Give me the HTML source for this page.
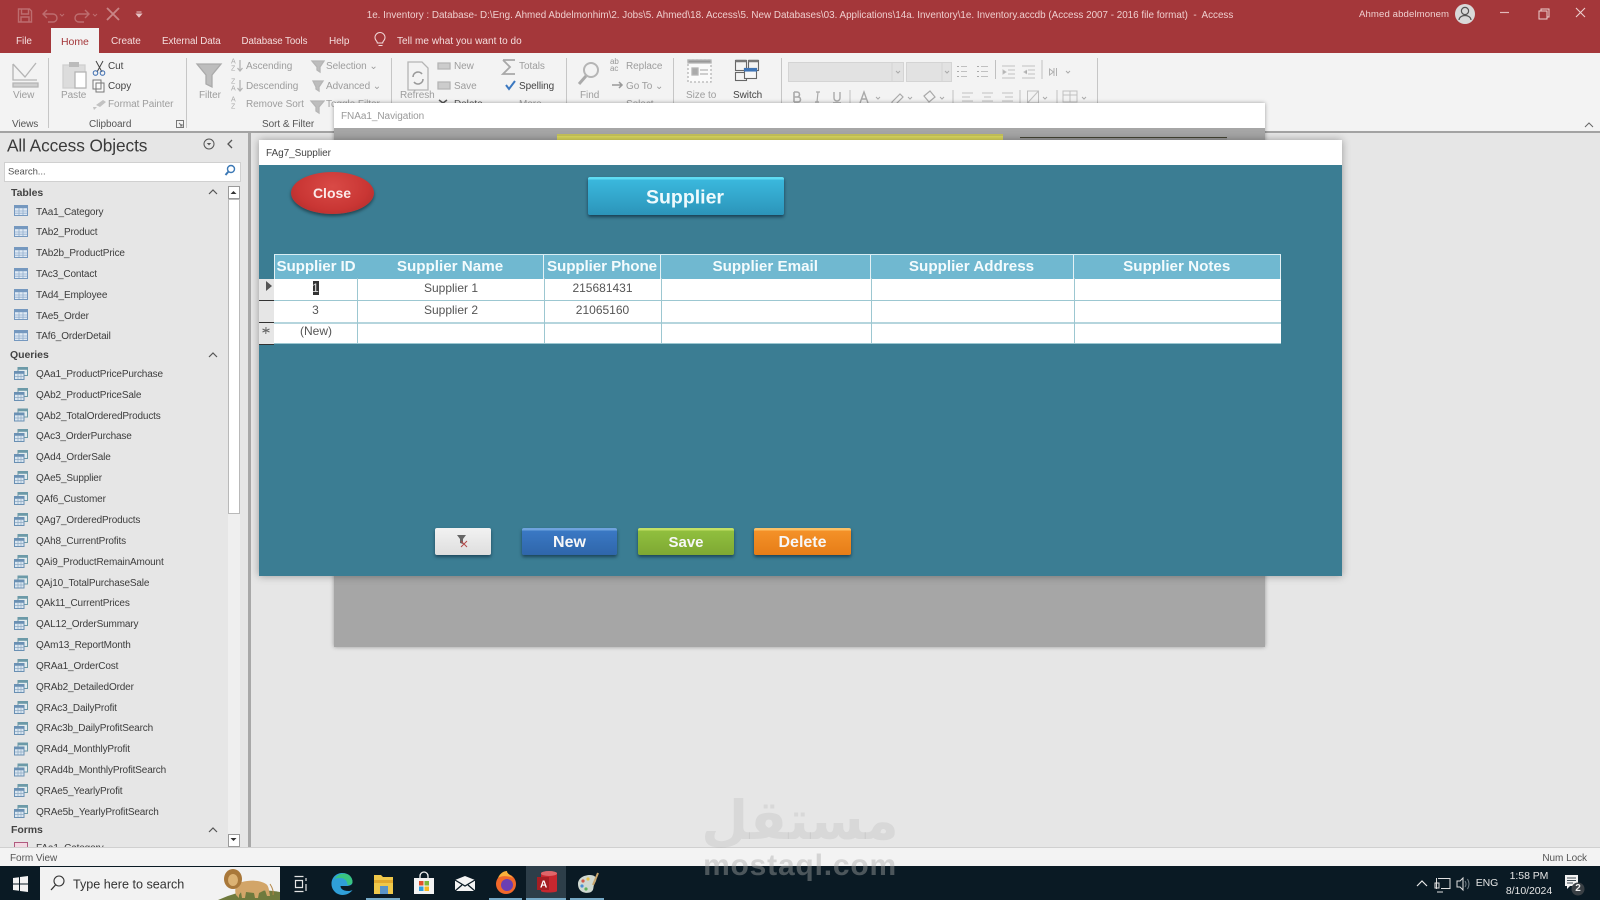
<!DOCTYPE html>
<html lang="en"><head><meta charset="utf-8"><title>Access</title>
<style>
html,body{margin:0;padding:0;width:1600px;height:900px;overflow:hidden;background:#e6e6e6}
body{position:relative;font-family:"Liberation Sans",sans-serif;color:#333}
.a{position:absolute}
.t{position:absolute;white-space:nowrap;line-height:1;transform:translateY(-50%);font-size:10px;letter-spacing:-.05px}
.g{color:#9d9d9d}
.w{color:#f4dede}
.l{color:#3d3d3d;letter-spacing:-.15px}
.sep{position:absolute;top:58px;height:70px;width:1px;background:#c6c6c6}
.c{text-align:center;transform:translate(-50%,-50%)}
svg{position:absolute;left:0;top:0;overflow:visible}
.btn{position:absolute;color:#f7f7f7;font-weight:bold;text-align:center;border-radius:2px;box-shadow:0 2px 3px rgba(0,20,40,.55)}
.hd{position:absolute;top:254px;height:24.5px;line-height:26px;background:#70b8d0;color:#f3fbfd;font-weight:bold;font-size:15.200px;text-align:center;white-space:nowrap;border-right:1px solid #e4f1f5}
.cell{position:absolute;font-size:12px;color:#555;line-height:1;transform:translate(-50%,-50%);white-space:nowrap}
</style></head>
<body>
<svg width="0" height="0" style="position:absolute">
<defs>
<symbol id="tb" viewBox="0 0 14 11"><rect x=".5" y=".5" width="13" height="10" fill="#dfe9f4" stroke="#7598bf"/><rect x="1" y="1" width="12" height="2.200" fill="#7598bf"/><path d="M5 3v7M9 3v7M1 6h12M1 8.200h12" stroke="#93afcd" stroke-width=".8"/></symbol>
<symbol id="qr" viewBox="0 0 14 13"><rect x="4" y=".5" width="9.500" height="8" fill="#e3ecee" stroke="#6c9aa8"/><rect x="4" y="1" width="9.500" height="1.800" fill="#6c9aa8"/><rect x=".5" y="4.500" width="9.500" height="8" fill="#dae6f0" stroke="#6a90b3"/><rect x=".5" y="5" width="9.500" height="1.800" fill="#6a90b3"/><path d="M4 7v5M7 7v5M1 9.500h9" stroke="#8fabc4" stroke-width=".7"/></symbol>
</defs></svg>

<!-- title bar -->
<div class="a" style="left:0;top:0;width:1600px;height:53px;background:#a4373a"></div>
<div class="a" style="left:51px;top:28px;width:48px;height:26px;background:#f3f3f3"></div>
<svg width="1600" height="60">
<g fill="none" stroke="#bd6d6f" stroke-width="1.400">
<path d="M18.500 9h11l2 2v11h-13zM21.500 9v5h7V9M21 22v-5h8v5"/>
<path d="M44 14h9a4 4 0 0 1 0 8h-5M47 10l-4 4 4 4"/>
<path d="M88 14h-9a4 4 0 0 0 0 8h5M85 10l4 4-4 4"/>
</g>
<path d="M107 8l12 12M119 8l-12 12" stroke="#c98587" stroke-width="1.800"/>
<path d="M60 14l2 2 2-2M93 14l2 2 2-2" stroke="#bd6d6f" fill="none"/>
<path d="M136.500 12h5M136.500 14l2.500 3 2.500-3z" stroke="#e8c6c7" fill="#e8c6c7" stroke-width="1"/>
<circle cx="1465" cy="14" r="10" fill="#d9d9d9"/>
<circle cx="1465" cy="11" r="3.600" fill="none" stroke="#555" stroke-width="1.200"/>
<path d="M1459 20c.5-6 11.500-6 12 0" fill="none" stroke="#555" stroke-width="1.200"/>
<path d="M1500 12.500h9" stroke="#e3b9ba" stroke-width="1.200"/>
<path d="M1539 11h8v8h-8zM1541 11V9h8v8h-2" fill="none" stroke="#ecd0d0" stroke-width="1"/>
<path d="M1576 8l9 9M1585 8l-9 9" stroke="#ecd0d0" stroke-width="1.100"/>
<path d="M376 46c-1-1-1.500-2-1.500-3.500a5 5 0 1 1 10 0c0 1.500-.500 2.500-1.500 3.500-.5.6-.8 1-.8 2h-5.400c0-1-.3-1.400-.8-2zM378 50.500h4" fill="none" stroke="#f1d9d9" transform="translate(.5 -5)"/>
</svg>
<div class="t w" style="left:800px;top:15.500px;font-size:9.850px;letter-spacing:0;transform:translate(-50%,-50%);color:#efcfcf">1e. Inventory : Database- D:\Eng. Ahmed Abdelmonhim\2. Jobs\5. Ahmed\18. Access\5. New Databases\03. Applications\14a. Inventory\1e. Inventory.accdb (Access 2007 - 2016 file format)&nbsp; -&nbsp; Access</div>
<div class="t w" style="left:1359px;top:15px;font-size:9.600px;letter-spacing:.1px;color:#efcfcf">Ahmed abdelmonem</div>
<div class="t w" style="left:16px;top:42px;">File</div>
<div class="t" style="left:61px;top:42px;color:#a4373a;font-size:10.500px">Home</div>
<div class="t w" style="left:111px;top:42px;">Create</div>
<div class="t w" style="left:162px;top:42px;font-size:9.800px">External Data</div>
<div class="t w" style="left:241.500px;top:42px;font-size:9.700px">Database Tools</div>
<div class="t w" style="left:329px;top:42px;">Help</div>
<div class="t w" style="left:397px;top:42px;font-size:10px;letter-spacing:.05px">Tell me what you want to do</div>

<!-- ribbon -->
<div class="a" style="left:0;top:53px;width:1600px;height:78px;background:#f3f3f3;border-bottom:2px solid #a3a3a3;box-sizing:content-box"></div>
<div class="sep" style="left:48px"></div><div class="sep" style="left:186px"></div><div class="sep" style="left:391px"></div><div class="sep" style="left:566px"></div><div class="sep" style="left:673px"></div><div class="sep" style="left:781px"></div><div class="sep" style="left:1097px"></div>
<svg width="1600" height="135">
<g fill="none" stroke="#b5b5b5" stroke-width="1.300">
<path d="M13 64l12 13 11-14M13 64v16h24"/><path d="M13 83h25v4H13z" fill="#cfcfcf"/>
<rect x="63" y="65" width="22" height="23" fill="#dcdcdc" stroke="#cfcfcf"/><rect x="69" y="62" width="10" height="5" fill="#bbb" stroke="none"/><rect x="75" y="72" width="11" height="16" fill="#fff"/>
<path d="M197 64h24l-9 11v12l-6-3v-9z" fill="#bdbdbd" stroke="#aaa"/>
<path d="M240 60v11M237.500 68l2.500 3 2.500-3M240 80v11M237.500 88l2.500 3 2.500-3"/>
<path d="M312 61h12l-4 6v5l-3-2v-3zM313 81h10l-4 6v4l-3-2v-2zM311 101h13l-5 6v6l-3-2v-4z" fill="#bdbdbd"/>
<path d="M408 62h14l6 6v22h-20z"/><path d="M413 77a5 5 0 0 1 9-3M423 79a5 5 0 0 1-9 3" stroke="#999" stroke-width="1.600"/>
<path d="M438 63h12v6h-12zM438 82h12v7h-12z" fill="#ccc"/>
<path d="M503 60h12M503 60l7 7-7 7h12" stroke-width="1.800" stroke="#a8a8a8"/>
<circle cx="591" cy="70" r="7" stroke-width="2" stroke="#b5b5b5"/><path d="M586 76l-7 8" stroke-width="3" stroke="#aaa"/>
<path d="M612 85h10M619 82l3 3-3 3" stroke="#999" stroke-width="1.500"/>
<rect x="688" y="60" width="23" height="22" stroke-dasharray="2 2" fill="#fafafa"/><rect x="688" y="60" width="23" height="3" fill="#999"/>
<rect x="692" y="68" width="6" height="7" fill="#aaa"/><path d="M700 70h8M700 74h8"/>
</g>
<g stroke="#666" fill="#f3f3f3" stroke-width="1.100">
<rect x="735.500" y="60.500" width="11" height="10"/><rect x="748.500" y="60.500" width="10" height="10"/><rect x="735.500" y="72.500" width="11" height="8"/>
<path d="M735.500 61h11M748.500 61h10" stroke-width="2.500" stroke="#777"/>
<rect x="744.500" y="68.500" width="12" height="10" fill="#f7f7f7"/><rect x="744.500" y="68.500" width="12" height="2.500" fill="#3f74b5" stroke="#3f74b5"/>
</g>
<path d="M96 61l6 11M103 61l-6 11" stroke="#444" stroke-width="1"/><circle cx="95.500" cy="73" r="2.300" fill="none" stroke="#3b6cb0"/><circle cx="102.500" cy="73" r="2.300" fill="none" stroke="#3b6cb0"/>
<path d="M93 80h8v9h-8zM96 83h8v9h-8z" fill="#fafafa" stroke="#777"/>
<path d="M96 105l7-5 3 2-6 5zM93 107l4 0-3 3z" fill="#c2c2c2"/>
<path d="M506 85l3 4 6-8" stroke="#3b78c0" stroke-width="2" fill="none"/>
<path d="M439 100l8 6M447 100l-8 6" stroke="#555" stroke-width="1.500"/>
<path d="M788.500 62.500h115v19h-115zM906.500 62.500h45v19h-45z" fill="#e2e2e2" stroke="#d4d4d4"/>
<path d="M892 62.500v19M942 62.500v19" stroke="#d4d4d4"/>
<path d="M896 71l2 2 2-2M945 71l2 2 2-2" stroke="#aaa" fill="none"/>
<g stroke="#c0c0c0" fill="none">
<path d="M961 66.500h6M961 71.500h6M961 76.500h6M981 66.500h7M981 71.500h7M981 76.500h7"/>
<path d="M957 66.500h2M957 71.500h2M957 76.500h2M977 66.500h2M977 71.500h2M977 76.500h2" stroke="#aaa"/>
<path d="M1002 66h13M1008 70h7M1008 74h7M1002 78h13M1022 66h13M1028 70h7M1028 74h7M1022 78h13"/>
<path d="M1003 70l3 2-3 2zM1027 70l-3 2 3 2" fill="#aaa"/>
<path d="M995.500 60v19M1042 60v19M850 90v13M953 90v13M1020 90v13M1057 90v13"/>
<path d="M1049.500 69v6l4-3zM1054 68v8M1056.500 68v8" stroke="#b0b0b0"/>
<path d="M1066 71l2 2 2-2M876 97l2 2 2-2M908 97l2 2 2-2M940 97l2 2 2-2M1043 97l2 2 2-2M1082 97l2 2 2-2" stroke="#aaa"/>
<path d="M962 93h11M962 97h8M962 101h11M982 93h11M984 97h7M982 101h11M1002 93h11M1005 97h8M1002 101h11"/>
<path d="M1027.500 91h11v12h-11zM1027.500 103l11-12"/>
<path d="M1063 91h14v11h-14zM1063 95h14M1070 91v11" />
</g>
<g fill="none" stroke="#aaa" stroke-width="1.200">
<path d="M794 92v10M794 92h3a2.500 2.500 0 0 1 0 5h-3M794 97h4a2.500 2.500 0 0 1 0 5h-4" stroke-width="1.600"/>
<path d="M816 92h4M815 102h4M818 92l-1 10"/>
<path d="M834 92v6a3 3 0 0 0 6 0v-6M833 103h8" stroke-width="1.400"/>
<path d="M860 103l4-11 4 11M862 99h5" stroke-width="1.400"/>
<path d="M892 102l8-8 3 3-8 8h-3zM924 96l5 6 6-5-5-6z"/>
</g>
<path d="M1585 127l4-4 4 4" fill="none" stroke="#666"/>
</svg>
<div class="t" style="left:231px;top:62px;font-size:7px;color:#aaa">A</div>
<div class="t" style="left:231px;top:69px;font-size:7px;color:#aaa">Z</div>
<div class="t" style="left:231px;top:82px;font-size:7px;color:#aaa">Z</div>
<div class="t" style="left:231px;top:89px;font-size:7px;color:#aaa">A</div>
<div class="t" style="left:231px;top:100px;font-size:7px;color:#aaa">A</div>
<div class="t" style="left:231px;top:107px;font-size:7px;color:#aaa">Z</div>
<div class="t" style="left:610px;top:62px;font-size:8px;color:#999">ab</div>
<div class="t" style="left:610px;top:69px;font-size:8px;color:#999">ac</div>
<div class="t g" style="left:13px;top:96px">View</div>
<div class="t g" style="left:61px;top:96px">Paste</div>
<div class="t" style="left:108px;top:67px;color:#444">Cut</div>
<div class="t" style="left:108px;top:87px;color:#444">Copy</div>
<div class="t g" style="left:108px;top:105px">Format Painter</div>
<div class="t g" style="left:199px;top:96px">Filter</div>
<div class="t g" style="left:246px;top:67px">Ascending</div>
<div class="t g" style="left:246px;top:87px">Descending</div>
<div class="t g" style="left:246px;top:105px">Remove Sort</div>
<div class="t g" style="left:326px;top:67px">Selection ⌄</div>
<div class="t g" style="left:326px;top:87px">Advanced ⌄</div>
<div class="t g" style="left:326px;top:105px">Toggle Filter</div>
<div class="t g" style="left:400px;top:96px">Refresh</div>
<div class="t g" style="left:454px;top:67px">New</div>
<div class="t g" style="left:454px;top:87px">Save</div>
<div class="t" style="left:454px;top:105px;color:#555">Delete</div>
<div class="t g" style="left:519px;top:67px">Totals</div>
<div class="t" style="left:519px;top:87px;color:#444">Spelling</div>
<div class="t g" style="left:519px;top:105px">More</div>
<div class="t g" style="left:580px;top:96px">Find</div>
<div class="t g" style="left:626px;top:67px">Replace</div>
<div class="t g" style="left:626px;top:87px">Go To ⌄</div>
<div class="t g" style="left:626px;top:105px">Select</div>
<div class="t g" style="left:686px;top:96px">Size to</div>
<div class="t" style="left:733px;top:96px;color:#444">Switch</div>
<div class="t" style="left:12px;top:124.500px;color:#555;font-size:10px">Views</div>
<div class="t" style="left:89px;top:124.500px;color:#555;font-size:10px">Clipboard</div>
<div class="t" style="left:262px;top:124.500px;color:#555;font-size:10px">Sort &amp; Filter</div>
<svg width="200" height="135"><path d="M176.500 120.500h7v7h-7zM179 123l3 3M182 124v2h-2" fill="none" stroke="#777"/></svg>

<!-- navigation form behind -->
<div class="a" style="left:334px;top:103px;width:931px;height:544px;background:#a6a6a6;box-shadow:0 0 4px rgba(0,0,0,.35)"></div>
<div class="a" style="left:334px;top:103px;width:931px;height:25px;background:#fff"></div>
<div class="t" style="left:341px;top:117px;color:#999">FNAa1_Navigation</div>
<div class="a" style="left:557px;top:134px;width:446px;height:8px;background:#dedb5e;border-top:2px solid #c7c35a"></div>
<div class="a" style="left:1020px;top:137px;width:207px;height:6px;background:#9a9a9a;border-top:1px solid #443"></div>

<!-- nav pane -->
<div class="a" style="left:0;top:133px;width:247px;height:715px;background:#e6e6e6;overflow:hidden">
<div class="t" style="left:7px;top:12.500px;font-size:17.300px;letter-spacing:-.1px;color:#3b3b3b">All Access Objects</div>
<div class="a" style="left:4px;top:29px;width:235px;height:18px;background:#fff;border:1px solid #d0d0d0"></div>
<div class="t" style="left:8px;top:38.500px;font-size:9.500px;color:#555">Search...</div>
<div class="t" style="left:11px;top:59.500px;font-weight:bold;font-size:10.500px;color:#444">Tables</div>
<div class="t" style="left:10px;top:222px;font-weight:bold;font-size:10.500px;color:#444">Queries</div>
<div class="t" style="left:11px;top:696.500px;font-weight:bold;font-size:10.500px;color:#444">Forms</div>
<div class="t l" style="left:36px;top:79.600px">TAa1_Category</div>
<div class="t l" style="left:36px;top:100.400px">TAb2_Product</div>
<div class="t l" style="left:36px;top:121.200px">TAb2b_ProductPrice</div>
<div class="t l" style="left:36px;top:142px">TAc3_Contact</div>
<div class="t l" style="left:36px;top:162.800px">TAd4_Employee</div>
<div class="t l" style="left:36px;top:183.600px">TAe5_Order</div>
<div class="t l" style="left:36px;top:204.400px">TAf6_OrderDetail</div>
<div class="t l" style="left:36px;top:241.800px">QAa1_ProductPricePurchase</div>
<div class="t l" style="left:36px;top:262.700px">QAb2_ProductPriceSale</div>
<div class="t l" style="left:36px;top:283.500px">QAb2_TotalOrderedProducts</div>
<div class="t l" style="left:36px;top:304.400px">QAc3_OrderPurchase</div>
<div class="t l" style="left:36px;top:325.300px">QAd4_OrderSale</div>
<div class="t l" style="left:36px;top:346.200px">QAe5_Supplier</div>
<div class="t l" style="left:36px;top:367px">QAf6_Customer</div>
<div class="t l" style="left:36px;top:387.900px">QAg7_OrderedProducts</div>
<div class="t l" style="left:36px;top:408.800px">QAh8_CurrentProfits</div>
<div class="t l" style="left:36px;top:429.700px">QAi9_ProductRemainAmount</div>
<div class="t l" style="left:36px;top:450.500px">QAj10_TotalPurchaseSale</div>
<div class="t l" style="left:36px;top:471.400px">QAk11_CurrentPrices</div>
<div class="t l" style="left:36px;top:492.300px">QAL12_OrderSummary</div>
<div class="t l" style="left:36px;top:513px">QAm13_ReportMonth</div>
<div class="t l" style="left:36px;top:533.800px">QRAa1_OrderCost</div>
<div class="t l" style="left:36px;top:554.600px">QRAb2_DetailedOrder</div>
<div class="t l" style="left:36px;top:575.500px">QRAc3_DailyProfit</div>
<div class="t l" style="left:36px;top:596.300px">QRAc3b_DailyProfitSearch</div>
<div class="t l" style="left:36px;top:617.100px">QRAd4_MonthlyProfit</div>
<div class="t l" style="left:36px;top:637.900px">QRAd4b_MonthlyProfitSearch</div>
<div class="t l" style="left:36px;top:658.800px">QRAe5_YearlyProfit</div>
<div class="t l" style="left:36px;top:679.700px">QRAe5b_YearlyProfitSearch</div>
<div class="t l" style="left:36px;top:715.500px">FAa1_Category</div>
<!-- scrollbar -->
<div class="a" style="left:227.500px;top:53px;width:12px;height:660px;background:#efefef"></div>
<div class="a" style="left:227.500px;top:53px;width:10px;height:11px;background:#fff;border:1px solid #9a9a9a"></div>
<div class="a" style="left:227.500px;top:66px;width:10px;height:313px;background:#fff;border:1px solid #b9b9b9"></div>
<div class="a" style="left:227.500px;top:701px;width:10px;height:11px;background:#fff;border:1px solid #9a9a9a"></div>
<svg width="246" height="715">
<use href="#tb" x="14" y="72" width="14" height="11"/><use href="#tb" x="14" y="93" width="14" height="11"/><use href="#tb" x="14" y="114" width="14" height="11"/><use href="#tb" x="14" y="135" width="14" height="11"/><use href="#tb" x="14" y="156" width="14" height="11"/><use href="#tb" x="14" y="176" width="14" height="11"/><use href="#tb" x="14" y="197" width="14" height="11"/>
<g transform="translate(0 -1)">
<use href="#qr" x="14" y="235" width="14" height="13"/><use href="#qr" x="14" y="256" width="14" height="13"/><use href="#qr" x="14" y="276.500" width="14" height="13"/><use href="#qr" x="14" y="297" width="14" height="13"/><use href="#qr" x="14" y="318" width="14" height="13"/><use href="#qr" x="14" y="339" width="14" height="13"/><use href="#qr" x="14" y="360" width="14" height="13"/><use href="#qr" x="14" y="381" width="14" height="13"/><use href="#qr" x="14" y="402" width="14" height="13"/><use href="#qr" x="14" y="423" width="14" height="13"/><use href="#qr" x="14" y="443.500" width="14" height="13"/><use href="#qr" x="14" y="464" width="14" height="13"/><use href="#qr" x="14" y="485" width="14" height="13"/><use href="#qr" x="14" y="506" width="14" height="13"/><use href="#qr" x="14" y="527" width="14" height="13"/><use href="#qr" x="14" y="548" width="14" height="13"/><use href="#qr" x="14" y="569" width="14" height="13"/><use href="#qr" x="14" y="590" width="14" height="13"/><use href="#qr" x="14" y="610.500" width="14" height="13"/><use href="#qr" x="14" y="631.500" width="14" height="13"/><use href="#qr" x="14" y="652" width="14" height="13"/><use href="#qr" x="14" y="673" width="14" height="13"/>
</g>
<rect x="14.500" y="709.500" width="13" height="10" fill="#f3d9e3" stroke="#b05a7f"/>
<path d="M209 61l4-4 4 4M209 224l4-4 4 4M209 699l4-4 4 4" fill="none" stroke="#555" stroke-width="1.200"/>
<path d="M230.500 61l3-3 3 3zM230.500 705l3 3 3-3z" fill="#333"/>
<circle cx="209" cy="11" r="5" fill="none" stroke="#555"/><path d="M206.800 10l2.200 2.400 2.200-2.400z" fill="#555"/>
<path d="M232 7l-4 4 4 4" fill="none" stroke="#555" stroke-width="1.300"/>
<circle cx="231" cy="36" r="3.500" fill="none" stroke="#3b78b5" stroke-width="1.400"/><path d="M228.500 38.500l-3 3.500" stroke="#3b78b5" stroke-width="2"/>
</svg>
</div>
<div class="a" style="left:248px;top:133px;width:2.500px;height:715px;background:#a8a8a8"></div>

<!-- supplier form -->
<div class="a" style="left:258.500px;top:140px;width:1083px;height:436px;background:#3b7d93;box-shadow:0 0 8px rgba(0,0,0,.35)"></div>
<div class="a" style="left:258.500px;top:140px;width:1083px;height:25px;background:#fff"></div>
<div class="t" style="left:266px;top:153.500px;color:#444">FAg7_Supplier</div>
<div class="a" style="left:291px;top:172px;width:83px;height:42px;border-radius:50%;background:radial-gradient(ellipse at 50% 35%,#d94a46 0,#c93634 60%,#a72a2a 100%);box-shadow:0 2px 3px rgba(0,0,0,.45)"></div>
<div class="t c" style="left:332px;top:193px;font-size:14px;font-weight:bold;color:#fbe9e9;letter-spacing:0">Close</div>
<div class="a" style="left:588px;top:177px;width:196px;height:38px;background:linear-gradient(#5fdcf3 0,#5fdcf3 2px,#3ab8dd 3px,#2c94b9 100%);border-radius:2px;box-shadow:0 2px 3px rgba(0,20,40,.6)"></div>
<div class="t c" style="left:685px;top:198px;font-size:19.500px;font-weight:bold;color:#eefafd;letter-spacing:0">Supplier</div>

<!-- table -->
<div class="a" style="left:258.500px;top:279px;width:15.500px;height:65px;background:#e6e6e6;border-bottom:1px solid #333"></div>
<div class="a" style="left:258.500px;top:300px;width:15.500px;height:1px;background:#333"></div>
<div class="a" style="left:258.500px;top:322px;width:15.500px;height:1px;background:#333"></div>
<div class="a" style="left:274px;top:278px;width:1007px;height:65.500px;background:#fff"></div>
<div class="hd" style="left:274px;width:82px;border-left:1px solid #e4f1f5;letter-spacing:-.1px">Supplier ID</div>
<div class="hd" style="left:357px;width:186px">Supplier Name</div>
<div class="hd" style="left:544px;width:116px;letter-spacing:-.1px">Supplier Phone</div>
<div class="hd" style="left:661px;width:208.500px">Supplier Email</div>
<div class="hd" style="left:870.500px;width:202px">Supplier Address</div>
<div class="hd" style="left:1073.500px;width:206.500px">Supplier Notes</div>
<div class="a" style="left:274px;top:254px;width:1007px;height:1px;background:#d8edf3"></div>
<div class="a" style="left:274px;top:300px;width:1007px;height:1px;background:#9cc7d1"></div>
<div class="a" style="left:274px;top:322px;width:1007px;height:1.500px;background:#b5d5dd"></div>
<div class="a" style="left:274px;top:343px;width:1007px;height:1px;background:#9cc7d1"></div>
<div class="a" style="left:357px;top:278px;width:1px;height:66px;background:#9cc7d1"></div>
<div class="a" style="left:544px;top:278px;width:1px;height:66px;background:#9cc7d1"></div>
<div class="a" style="left:661px;top:278px;width:1px;height:66px;background:#9cc7d1"></div>
<div class="a" style="left:871px;top:278px;width:1px;height:66px;background:#9cc7d1"></div>
<div class="a" style="left:1074px;top:278px;width:1px;height:66px;background:#9cc7d1"></div>
<div class="a" style="left:312.500px;top:281px;width:6px;height:14px;background:#333"></div>
<div class="cell" style="left:315.500px;top:288px;color:#ddd">1</div>
<div class="cell" style="left:451px;top:288px">Supplier 1</div>
<div class="cell" style="left:602.500px;top:288px">215681431</div>
<div class="cell" style="left:315.500px;top:309.500px">3</div>
<div class="cell" style="left:451px;top:309.500px">Supplier 2</div>
<div class="cell" style="left:602.500px;top:309.500px">21065160</div>
<div class="cell" style="left:316px;top:331px">(New)</div>
<svg width="300" height="350"><path d="M266 281l6 5-6 5z" fill="#555"/><path d="M266 327l-.2 7M262.500 329l7 3M269.500 329l-7 3" stroke="#666" stroke-width="1"/></svg>

<!-- buttons -->
<div class="btn" style="left:435px;top:528px;width:56px;height:27px;background:linear-gradient(#f2f2f2,#dedede);box-shadow:0 2px 3px rgba(0,20,40,.5)"></div>
<svg width="500" height="560"><path d="M457 535h9l-3 4v5l-3-1v-4z" fill="#666"/><path d="M461 541l6 6M467 541l-6 6" stroke="#b34a4a" stroke-width="1"/></svg>
<div class="btn" style="left:522px;top:528px;width:95px;height:27px;line-height:29px;font-size:16px;background:linear-gradient(#6fa3de 0,#6fa3de 2px,#3a78c4 3px,#2f66aa 100%)">New</div>
<div class="btn" style="left:638px;top:528px;width:96px;height:27px;line-height:29px;font-size:15px;background:linear-gradient(#c2e064 0,#c2e064 2px,#90bf3e 3px,#7ea833 100%)">Save</div>
<div class="btn" style="left:754px;top:528px;width:97px;height:27px;line-height:29px;font-size:16px;background:linear-gradient(#fbc066 0,#fbc066 2px,#f49128 3px,#e67d17 100%)">Delete</div>

<!-- status bar -->
<div class="a" style="left:0;top:847px;width:1600px;height:19px;background:#f3f3f3;border-top:1px solid #d0d0d0;box-sizing:border-box"></div>
<div class="t" style="left:10px;top:859px;color:#555;font-size:10px">Form View</div>
<div class="t" style="right:13px;top:859px;color:#555;font-size:10px">Num Lock</div>

<!-- taskbar -->
<div class="a" style="left:0;top:866px;width:1600px;height:34px;background:#0a1a24"></div>
<div class="a" style="left:40px;top:867px;width:240px;height:33px;background:#f2f2f2"></div>
<div class="a" style="left:526px;top:866px;width:40px;height:34px;background:#2d3e49"></div>
<div class="a" style="left:366px;top:898px;width:34px;height:2px;background:#76a9c6"></div>
<div class="a" style="left:489px;top:898px;width:33px;height:2px;background:#76a9c6"></div>
<div class="a" style="left:526px;top:898px;width:40px;height:2px;background:#76a9c6"></div>
<div class="a" style="left:570px;top:898px;width:34px;height:2px;background:#76a9c6"></div>
<div class="t" style="left:73px;top:884.500px;font-size:12.600px;color:#333;letter-spacing:0">Type here to search</div>
<svg width="1600" height="900">
<path d="M13 878l6-.8v6.300h-6zM20 877l8-1v7.500h-8zM13 884.500h6v6.300l-6-.8zM20 884.500h8v7.500l-8-1z" fill="#f2f2f2"/>
<circle cx="59" cy="881" r="5" fill="none" stroke="#333" stroke-width="1.100"/><path d="M55.500 885l-4.500 5" stroke="#333" stroke-width="1.300"/>
<!-- lion -->
<path d="M218 900q30-14 62-8v8z" fill="#6f7a3d"/>
<path d="M236 895c-2-6 0-11 6-13 8-2 18-2 24 2 3 2 3 7 4 12h-3l-2-6-6 3-1 5h-3l-1-5-8-1-1 6h-3l-1-6-2 3v3z" fill="#d2a568"/>
<ellipse cx="233" cy="879" rx="9" ry="10" fill="#a9783a"/><ellipse cx="233" cy="880" rx="5" ry="6" fill="#dcb273"/>
<path d="M270 884q4 6 3 11" fill="none" stroke="#b28444" stroke-width="1"/>
<!-- task view -->
<path d="M294.500 876.500h9M294.500 891.500h9M295.500 880.500h7v7h-7zM306 878v3M306 884v7" fill="none" stroke="#e5e5e5" stroke-width="1.200"/>
<!-- edge -->
<path d="M333 884c0-7 5-11 11-11s10 4 10 9c0 3-3 4-6 4h-6c0 3 3 5 8 5 2 0 4-1 4-1-2 3-6 5-10 5-6 0-11-5-11-11z" fill="#2f9fd8" transform="translate(-1.500 0)"/>
<path d="M336 879c3-5 8-6 12-5s6 5 6 8c0 2-2 3-5 3 0-4-3-7-7-7-2 0-4 0-6 1z" fill="#39c480" transform="translate(-1.500 0)"/>
<!-- explorer -->
<path d="M374 875h7l2 2h10v17h-19z" fill="#f0c84a"/><path d="M374 880h19v3h-19z" fill="#e2a92e"/><rect x="380" y="886" width="8" height="8" fill="#5a94c9"/>
<!-- store -->
<path d="M414 878h20v16h-20z" fill="#f3f3f3"/><path d="M420 878v-2a4 4 0 0 1 8 0v2" fill="none" stroke="#f3f3f3" stroke-width="1.300"/>
<rect x="419" y="881" width="4.500" height="4.500" fill="#e2502c"/><rect x="424.500" y="881" width="4.500" height="4.500" fill="#7db83a"/><rect x="419" y="886.500" width="4.500" height="4.500" fill="#2f9fe0"/><rect x="424.500" y="886.500" width="4.500" height="4.500" fill="#f5b921"/>
<!-- mail -->
<path d="M455 880l10-4 10 4v11h-20z" fill="#f4f4f4"/><path d="M455 880l10 6 10-6M455 891l7-6M475 891l-7-6" stroke="#0a1a24" stroke-width="1.300" fill="none"/>
<!-- firefox -->
<circle cx="506" cy="884" r="10" fill="#f2682a"/><circle cx="507" cy="885" r="6" fill="#6b3fb3"/><path d="M498 878c2-5 6-7 9-7 0 3 4 4 6 7-4-2-11-3-15 0z" fill="#fbb13a"/>
<!-- access -->
<path d="M541 873c0-2 16-2 16 0v18c0 2-16 2-16 0z" fill="#c7272f"/><ellipse cx="549" cy="873.500" rx="8" ry="2.500" fill="#e0666a"/>
<rect x="537" y="877" width="12" height="13" fill="#a41e23"/>
<text x="540" y="887.500" font-family="Liberation Sans,sans-serif" font-size="10" font-weight="bold" fill="#fff">A</text>
<!-- paint -->
<path d="M578 884c0-6 6-9 12-9 5 0 7 3 6 6l-2 4c-1 3 0 5-3 7-4 2-13 1-13-8z" fill="#cfd8d0"/>
<circle cx="583" cy="881" r="1.600" fill="#d35a4a"/><circle cx="588" cy="879" r="1.600" fill="#e3c14b"/><circle cx="582" cy="886" r="1.600" fill="#4b8fd3"/><circle cx="586" cy="889" r="1.600" fill="#5fb25b"/>
<path d="M593 885l5-12" stroke="#c9a56b" stroke-width="2"/>
<!-- tray -->
<path d="M1417 886l5-5 5 5" fill="none" stroke="#e8e8e8" stroke-width="1.200"/>
<path d="M1438 878.500h12v10h-9M1436.500 878v11M1435 883h4v5h-4zM1437 892h6" fill="none" stroke="#e0e0e0" stroke-width="1"/>
<path d="M1457 881h3l3-3v12l-3-3h-3z" fill="none" stroke="#e0e0e0" stroke-width="1"/><path d="M1465 881q2 3 0 6M1467.500 879q3 5 0 10" fill="none" stroke="#77838a" stroke-width="1"/>
<path d="M1565 875h13v11h-8l-3 3v-3h-2z" fill="#f2f2f2"/><path d="M1567 878h9M1567 880.500h9M1567 883h6" stroke="#0a1a24" stroke-width=".8"/>
<circle cx="1578" cy="889" r="6.500" fill="#3a4045"/>
</svg>
<div class="t c" style="left:1578px;top:889px;font-size:10px;color:#f0f0f0;font-weight:bold">2</div>
<div class="t c" style="left:1487px;top:883px;font-size:10.500px;color:#e5e5e5">ENG</div>
<div class="t c" style="left:1529px;top:876px;font-size:10.500px;color:#e5e5e5">1:58 PM</div>
<div class="t c" style="left:1529px;top:891px;font-size:10.500px;color:#e5e5e5">8/10/2024</div>

<!-- watermark -->
<div class="t c" style="left:800px;top:821px;font-family:'DejaVu Sans',sans-serif;font-weight:bold;font-size:54px;color:rgba(150,150,150,.17);letter-spacing:0" dir="rtl">مستقل</div>
<div class="t c" style="left:800px;top:866px;font-size:30px;font-weight:bold;color:rgba(170,170,170,.42);letter-spacing:.8px">mostaql.com</div>
</body></html>
